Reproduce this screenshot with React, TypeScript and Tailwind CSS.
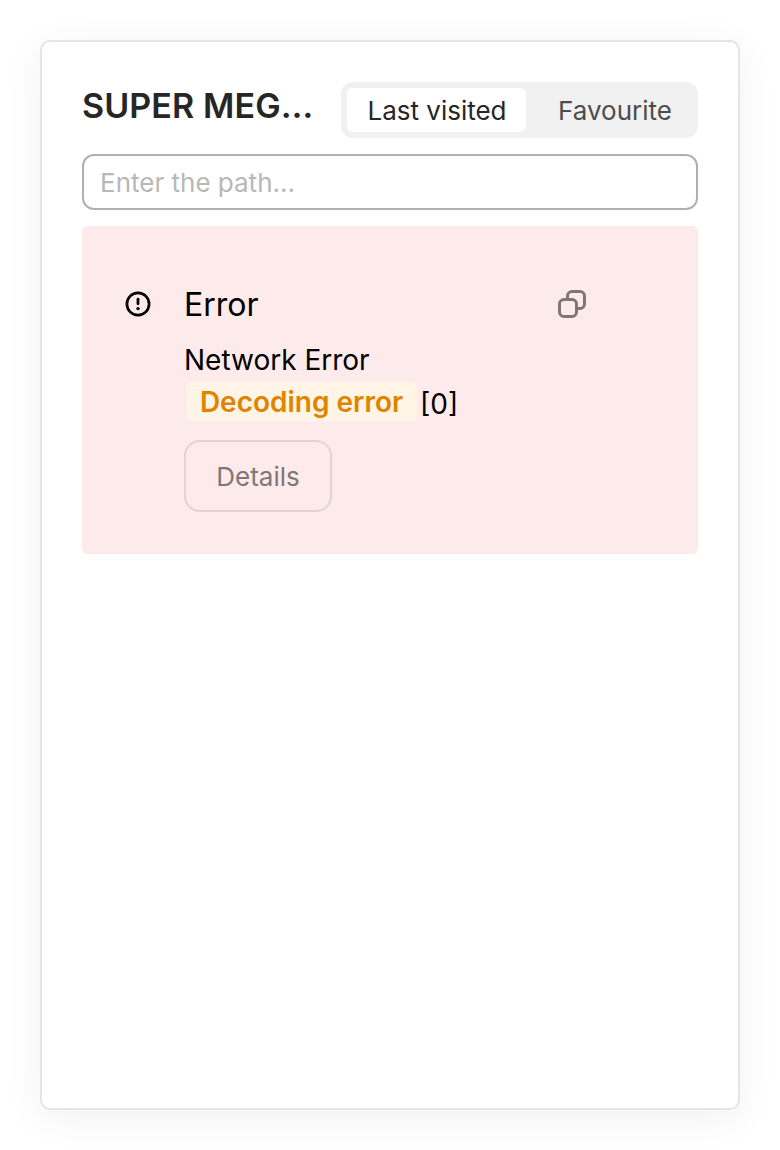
export default function App() {
  return (
    <div className="h-[1150px] w-[780px] bg-white p-10 font-['Inter',sans-serif]">
      <main className="flex h-[1070px] w-[700px] flex-col rounded-[10px] border-2 border-[#e5e5e5] bg-white p-10 shadow-[0_8px_40px_rgba(0,0,0,0.06)]">
        <header className="flex h-14 items-center justify-between">
          <h1 className="pb-2 text-[34px] leading-[44px] font-semibold tracking-[0.1px] whitespace-nowrap text-[#262626]">SUPER MEG…</h1>
          <div className="flex h-14 w-[357px] rounded-xl bg-[#f1f1f1] p-[6px] text-[26px]">
            <button className="w-[179px] rounded-md bg-white pt-px pl-px text-[#262626]">Last visited</button>
            <button className="flex-1 pt-px pl-3 text-[#4d4d4d]">Favourite</button>
          </div>
        </header>
        <input placeholder="Enter the path..." className="mt-4 h-14 w-full shrink-0 rounded-xl border-2 border-[#b0b0b0] px-4 pt-px text-[26px] outline-none placeholder:text-[#b8b8b8]" />
        <section className="mt-4 flex h-[328px] rounded-md bg-[#fdeaea] pt-[60px] pl-[42px]">
          <svg className="mt-1 h-7 w-7 shrink-0" viewBox="0 0 28 28" fill="none" stroke="#000">
            <circle cx="14" cy="14" r="11.1" strokeWidth="2.7" />
            <path d="M14 9.2v4.6" strokeWidth="2.8" strokeLinecap="round" />
            <circle cx="14" cy="18.6" r="1.7" fill="#000" stroke="none" />
          </svg>
          <div className="ml-8 w-[402px]">
            <div className="flex h-9 items-center justify-between">
              <h2 className="pt-[2px] text-[32px] leading-9">Error</h2>
              <svg className="h-7 w-7" viewBox="0 0 28 28" fill="none" stroke="#7f7775" strokeWidth="3">
                <rect x="1.5" y="9.5" width="17" height="17" rx="4.5" />
                <path d="M9.5 9.5V6A4.5 4.5 0 0 1 14 1.5h8A4.5 4.5 0 0 1 26.5 6v8a4.5 4.5 0 0 1-4.5 4.5h-3.5" />
              </svg>
            </div>
            <p className="mt-[18px] text-[28px] leading-10">Network Error</p>
            <div className="mt-[2px] flex h-10 items-center gap-[3px] pl-[2px] text-[28px]">
              <span className="h-10 w-[231px] rounded-md bg-[#fff4e5] text-center leading-10 font-semibold text-[#de8500]">Decoding error</span>
              <span className="pt-1">[0]</span>
            </div>
            <button className="mt-[18px] h-[72px] w-[148px] rounded-2xl border-2 border-[#e4d3d2] pt-px text-[26px] text-[#7f7775]">Details</button>
          </div>
        </section>
      </main>
    </div>
  );
}
